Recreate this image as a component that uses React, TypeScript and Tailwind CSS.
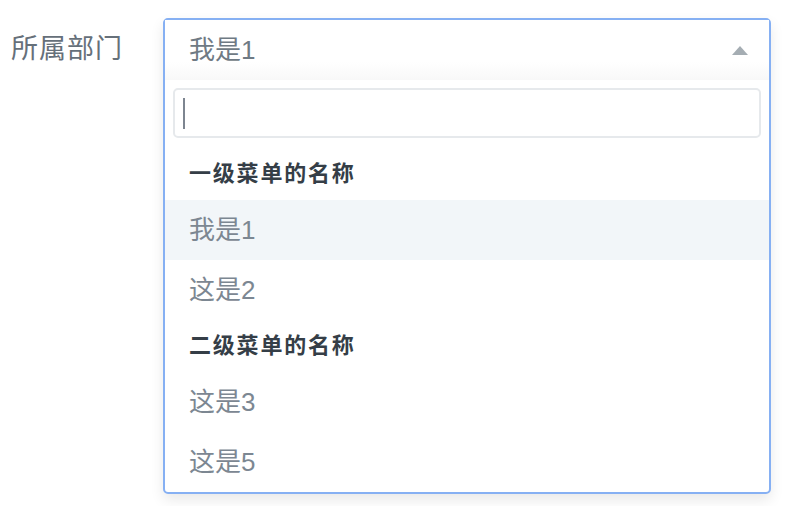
const font = { fontFamily: '"Liberation Sans", "Noto Sans CJK SC", sans-serif' };

type Group = { title: string; items: string[] };

const groups: Group[] = [
  { title: "一级菜单的名称", items: ["我是1", "这是2"] },
  { title: "二级菜单的名称", items: ["这是3", "这是5"] },
];

export default function App() {
  const selected = "我是1";

  return (
    <div className="min-h-screen bg-white" style={font}>
      <div className="flex items-start pt-[18px]">
        <label className="w-[163px] shrink-0 pl-[11px] pt-[17px] text-[27px] leading-[28px] tracking-[1px] text-[#66707a]">
          所属部门
        </label>

        <div className="w-[608px] rounded-[5px] border-2 border-[#86b0f3] bg-white shadow-[0_6px_14px_rgba(0,0,0,0.09)]">
          {/* control */}
          <div className="flex h-[60px] items-center justify-between bg-gradient-to-b from-white from-70% to-[#f8f8f8] pl-[24px] pr-[21px]">
            <span className="text-[26px] leading-none text-[#6f7a84]">{selected}</span>
            <svg width="16" height="9" viewBox="0 0 16 9">
              <path d="M8 0 L16 9 L0 9 Z" fill="#a5adb3" />
            </svg>
          </div>

          {/* menu */}
          <div>
            <div className="px-[8px] pt-[8px] pb-[10px]">
              <div className="flex h-[50px] items-center rounded-[5px] border-2 border-[#e6e9ec] pl-[8px]">
                <div className="h-[31px] w-[2px] bg-[#7d8590]" />
              </div>
            </div>

            {groups.map((g) => (
              <div key={g.title}>
                <div className="flex h-[52px] items-center pl-[24px] text-[22px] font-bold leading-none tracking-[1.8px] text-[#353e47]">
                  {g.title}
                </div>
                {g.items.map((it) => (
                  <div
                    key={it}
                    className={`flex h-[60px] items-center pl-[24px] text-[26px] leading-none text-[#7c8792] ${
                      it === selected ? "bg-[#f2f6f9]" : ""
                    }`}
                  >
                    {it}
                  </div>
                ))}
              </div>
            ))}
          </div>
        </div>
      </div>
    </div>
  );
}
